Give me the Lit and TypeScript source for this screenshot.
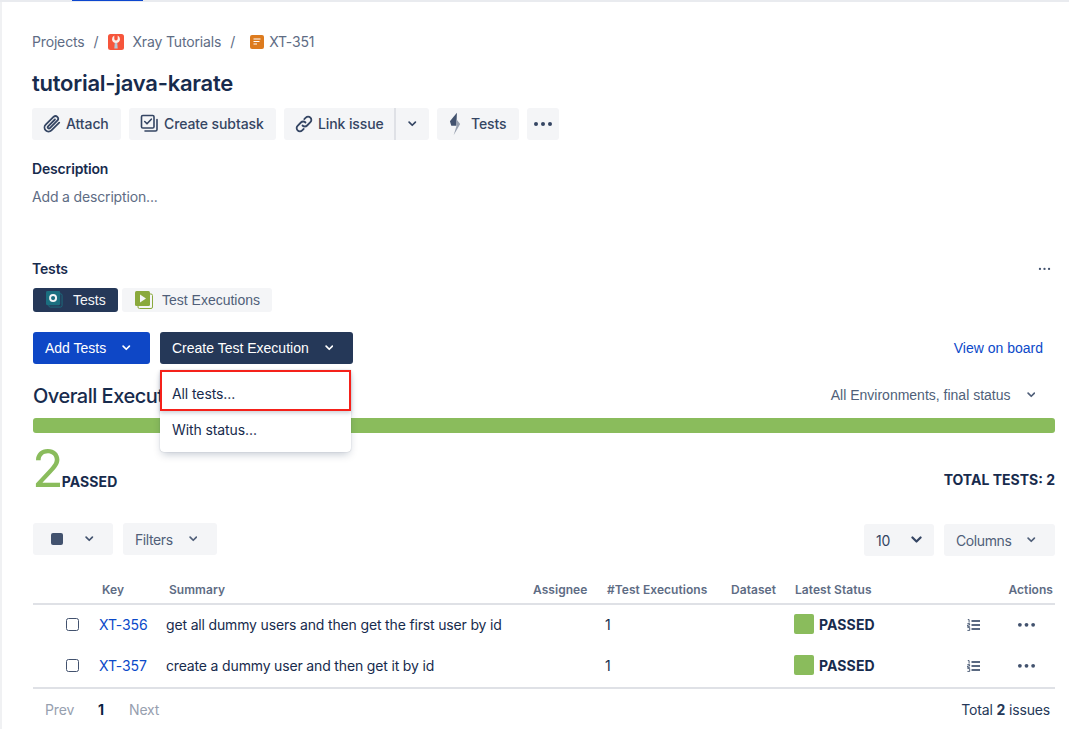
import { LitElement, html, css } from "lit";
import { customElement } from "lit/decorators.js";

const chev = (w = 8.5) => html`<svg viewBox="0 0 10 7" width=${w} height=${(w * 7) / 10}><path d="M1.300 1.300 5 5l3.700-3.700" fill="none" stroke="currentColor" stroke-width="2" stroke-linecap="round" stroke-linejoin="round"/></svg>`;
const dots = (w = 20, r = 2) => html`<svg viewBox="0 0 20 6" width=${w} height=${(w * 6) / 20}><g fill="currentColor"><circle cx="3" cy="3" r=${r}/><circle cx="10" cy="3" r=${r}/><circle cx="17" cy="3" r=${r}/></g></svg>`;
const listIcon = html`<svg viewBox="0 0 13 12" width="13" height="12"><path d="M4.500 2h8.500M4.500 6h8.500M4.500 10h8.500" stroke="#253858" stroke-width="1.600" fill="none"/><path d="M.8 .6h1.300v3M.4 4.600h2.200v1.400H.6v1.400h2.200M.4 8.600h2.300v2.800H.4" stroke="#253858" stroke-width=".8" fill="none"/></svg>`;

@customElement("app-root")
export class AppRoot extends LitElement {
  static styles = css`
    :host { display: block; width: 1069px; height: 729px; overflow: hidden; position: relative; background: #fff; font-family: Inter, "Liberation Sans", sans-serif; color: #172b4d; font-size: 14px; letter-spacing: -.16px; box-sizing: border-box; }
    * { box-sizing: border-box; }
    .topline { height: 2px; background: #e9ebef; display: flex; padding-left: 72px; }
    .topline i { display: block; width: 71px; height: 1px; background: #0c47cf; }
    .page { height: 727px; border-left: 2px solid #f0f1f3; padding: 0 14px 0 30px; display: flex; flex-direction: column; }
    .crumbs { height: 24px; margin-top: 28px; display: flex; align-items: center; color: #5e6c84; font-size: 14px; }
    .sep { margin-left: 9px; width: 15px; }
    .crumbs .sep2 { margin-left: 9px; width: 20px; }
    .crumbs .proj { margin-right: 8px; }
    .crumbs .iss { margin-right: 5px; }
    h1 { margin: 14px 0 0; height: 30px; line-height: 30px; font-size: 22px; font-weight: 600; color: #172b4d; letter-spacing: -.25px; }
    .actions { display: flex; margin-top: 10px; gap: 8px; }
    .btn { height: 32px; background: #f4f5f7; border-radius: 3px; display: flex; align-items: center; color: #344563; font-size: 14px; font-weight: 500; letter-spacing: -.1px; }
    .attach { width: 89px; padding-left: 10px; gap: 5px; }
    .sub { width: 147px; padding-left: 11px; gap: 5px; }
    .link { width: 112px; padding-left: 10px; gap: 4px; border-right: 2px solid #dfe1e6; border-radius: 3px 0 0 3px; }
    .linkc { width: 33px; justify-content: center; margin-left: -8px; border-radius: 0 3px 3px 0; }
    .testsb { width: 82px; padding-left: 12px; gap: 9px; }
    .more { width: 32px; justify-content: center; }
    .h3 { font-size: 14px; font-weight: 600; color: #172b4d; height: 20px; line-height: 20px; }
    .desc { margin-top: 19px; }
    .add { margin-top: 8px; color: #5e6c84; height: 20px; line-height: 20px; }
    .testsh { margin-top: 52px; display: flex; justify-content: space-between; align-items: center; padding-right: 4px; color: #42526e; }
    .testsh span { color: #172b4d; }
    .sans { font-family: "Liberation Sans", Arial, sans-serif; letter-spacing: 0; }
    .tabs { display: flex; margin-top: 9px; gap: 4px; margin-left: 1px; }
    .tab { height: 24px; border-radius: 3px; display: flex; align-items: center; font-size: 14px; }
    .tab.on { width: 85px; background: #253858; color: #f4f5f7; padding-left: 13px; gap: 10px; }
    .tab.off { width: 150px; background: #f4f5f7; color: #505f79; padding-left: 13px; gap: 9px; }
    .ctl { display: flex; justify-content: space-between; align-items: center; margin-top: 20px; margin-left: 1px; }
    .ctl .l { display: flex; gap: 10px; }
    .pri { height: 32px; border-radius: 3px; display: flex; align-items: center; color: #fff; font-size: 14px; padding-left: 12px; }
    .add-t { width: 117px; background: #0e47c6; gap: 16px; }
    .wrap { position: relative; }
    .create { width: 193px; background: #253858; gap: 16px; }
    .menu { position: absolute; left: 0; top: 38px; width: 191px; height: 82px; background: #fff; border-radius: 0 0 4px 4px; box-shadow: 0 4px 8px -2px rgba(9,30,66,.25), 0 0 1px rgba(9,30,66,.31); z-index: 3; color: #172b4d; font-family: Inter, sans-serif; letter-spacing: -.1px; }
    .mi { height: 36px; display: flex; align-items: center; padding-left: 12px; }
    .mi.sel { height: 41px; border: 2px solid #f5211a; padding: 6px 0 0 10px; box-shadow: 0 2px 4px rgba(9,30,66,.2); margin-bottom: 1px; }
    .vb { color: #0b49c9; font-size: 14px; margin-right: 12px; }
    .ov { display: flex; justify-content: space-between; align-items: center; height: 26px; margin-top: 20px; margin-left: 1px; }
    .ov .t { font-size: 20px; font-weight: 500; color: #172b4d; white-space: nowrap; letter-spacing: -.5px; }
    .env { color: #505f79; display: flex; align-items: center; gap: 16px; margin: 0 20px 2px 0; font-size: 14px; }
    .bar { height: 15px; background: #8abc5c; border-radius: 3px; margin-top: 9px; margin-left: 1px; }
    .sum { display: flex; justify-content: space-between; align-items: flex-start; height: 68px; margin-left: 1px; }
    .big { display: flex; align-items: baseline; color: #8abc5c; font-size: 52px; line-height: 51px; height: 51px; margin-top: 10px; margin-left: -1px; letter-spacing: 0; }
    .big b { font-size: 14px; font-weight: 700; color: #172b4d; line-height: 14px; margin-left: -2px; letter-spacing: .1px; }
    .tot { font-weight: 700; color: #172b4d; height: 14px; line-height: 14px; margin-top: 40px; letter-spacing: 0; }
    .tb { display: flex; justify-content: space-between; margin-top: 23px; margin-left: 1px; height: 32px; }
    .tb .g { display: flex; gap: 10px; }
    .sq { width: 80px; padding-left: 18px; gap: 22px; color: #42526e; }
    .sq i { width: 12px; height: 12px; border-radius: 2px; background: #42526e; display: block; }
    .fl { width: 94px; padding: 1px 0 0 12px; gap: 16px; font-weight: 400; color: #505f79; letter-spacing: -.4px; }
    .n10 { width: 70px; padding: 1px 0 0 12px; gap: 21px; font-weight: 400; margin-top: 1px; }
    .cols { width: 111px; padding: 1px 0 0 12px; gap: 16px; font-weight: 400; color: #505f79; margin-top: 1px; letter-spacing: -.4px; }
    .table { margin-top: 22px; margin-left: 1px; }
    .row { display: grid; grid-template-columns: 66px 67px 364px 74px 124px 64px 144px 1fr; align-items: center; }
    .head { height: 28px; padding-bottom: 1px; border-bottom: 2px solid #dfe1e6; font-size: 12px; font-weight: 600; color: #5e6c84; letter-spacing: .05px; }
    .head > div { padding-left: 3px; white-space: nowrap; }
    .head .ac { text-align: right; padding-right: 2px; }
    .b { height: 41px; padding-bottom: 2px; color: #172b4d; white-space: nowrap; }
    .cb { width: 13px; height: 13px; border: 1px solid #42526e; border-radius: 2.500px; margin-left: 33px; display: block; }
    .key { color: #0b49c9; letter-spacing: -.1px; }
    .one { padding-left: 1px; }
    .stat { display: flex; align-items: center; gap: 5px; font-weight: 700; letter-spacing: .1px; padding-left: 2px; }
    .stat i { width: 20px; height: 20px; background: #8abc5c; border-radius: 2px; display: block; }
    .acts { display: flex; align-items: center; justify-content: flex-end; padding: 2px 19px 0 0; gap: 37px; color: #42526e; }
    .tfoot { border-top: 2px solid #dfe1e6; display: flex; justify-content: space-between; align-items: center; height: 43px; margin-left: 1px; padding: 2px 5px 0 12px; }
    .pg { display: flex; color: #97a0af; gap: 24px; align-items: center; }
    .pg b { color: #091e42; font-weight: 700; margin-right: 1px; }
    .tt { color: #253858; }
    .tt b { font-weight: 700; }
  `;

  render() {
    return html`
      <div class="topline"><i></i></div>
      <div class="page">
        <div class="crumbs">
          <span>Projects</span><span class="sep">/</span>
          <svg class="proj" viewBox="0 0 16 16" width="16" height="16"><rect width="16" height="16" rx="2.500" fill="#f6553b"/><path d="M6.800 8.500h2.400l.5 6H6.300z" fill="#b5c7d6"/><path d="M6.300 1.600v3.200a1.700 1.700 0 0 0 3.400 0V1.600a4 4 0 0 1 2.300 3.600c0 2-1.700 3.800-4 3.800s-4-1.800-4-3.800A4 4 0 0 1 6.300 1.600z" fill="#fbeee9"/></svg>
          <span>Xray Tutorials</span><span class="sep sep2">/</span>
          <svg class="iss" viewBox="0 0 14 14" width="14" height="14"><rect width="14" height="14" rx="2" fill="#dd7b1e"/><path d="M3.500 4h7M3.500 6.500h6M3.500 9h3.500" stroke="#fff" stroke-width="1.200"/></svg>
          <span>XT-351</span>
        </div>
        <h1>tutorial-java-karate</h1>
        <div class="actions">
          <div class="btn attach"><svg viewBox="0 0 19 19" width="19" height="19"><path d="M17.200 8.600 9.400 16.400a4 4 0 0 1-5.700-5.700l8-8a2.700 2.700 0 0 1 3.800 3.800l-7.600 7.600a1.200 1.200 0 0 1-1.800-1.800l6.800-6.800" fill="none" stroke="#344563" stroke-width="1.800" stroke-linecap="round"/></svg>Attach</div>
          <div class="btn sub"><svg viewBox="0 0 19 19" width="19" height="19"><rect x="1.500" y="1.500" width="12.500" height="12.500" rx="1.300" fill="none" stroke="#344563" stroke-width="1.600"/><path d="M4.700 7.500l2.300 2.300 4.300-4.600" fill="none" stroke="#344563" stroke-width="1.600" stroke-linecap="round" stroke-linejoin="round"/><path d="M17 5.500v10a1.500 1.500 0 0 1-1.500 1.500H5" fill="none" stroke="#344563" stroke-width="1.600" stroke-linecap="round"/></svg>Create subtask</div>
          <div class="btn link"><svg viewBox="0 0 20 20" width="20" height="20"><path d="M8.500 11.500a3.200 3.200 0 0 0 4.600 0l3.300-3.300a3.200 3.200 0 0 0-4.600-4.600l-1.500 1.500M11.500 8.500a3.200 3.200 0 0 0-4.600 0l-3.300 3.300a3.200 3.200 0 0 0 4.600 4.600l1.500-1.500" fill="none" stroke="#344563" stroke-width="1.800" stroke-linecap="round"/></svg>Link issue</div>
          <div class="btn linkc">${chev()}</div>
          <div class="btn testsb"><svg viewBox="0 0 14 24" width="13" height="24"><path d="M8.500 0 1 9l1.500 5H8z" fill="#42526e"/><path d="M8 7 12 12l-7 12 3-9.500z" fill="#97a0af"/></svg>Tests</div>
          <div class="btn more">${dots(20, 2)}</div>
        </div>
        <div class="h3 desc">Description</div>
        <div class="add">Add a description...</div>
        <div class="h3 testsh"><span>Tests</span>${dots(13, 1.800)}</div>
        <div class="tabs sans">
          <div class="tab on"><svg viewBox="0 0 18 18" width="17" height="17"><rect x="3" y="3" width="14" height="14" rx="1.500" fill="none" stroke="#1d6c7e"/><rect width="15" height="15" rx="1.500" fill="#1b6f80"/><circle cx="7.500" cy="7.500" r="3.200" fill="none" stroke="#f4f5f7" stroke-width="2"/></svg>Tests</div>
          <div class="tab off"><svg viewBox="0 0 18 18" width="18" height="18"><rect x="3" y="3" width="14.500" height="14.500" rx="1.500" fill="none" stroke="#8aa93c"/><rect width="15" height="15" rx="1.500" fill="#8aa93c"/><path d="M5 3.500v8l6-4z" fill="#f4f5f7"/></svg>Test Executions</div>
        </div>
        <div class="ctl sans">
          <div class="l">
            <div class="pri add-t">Add Tests ${chev()}</div>
            <div class="wrap">
              <div class="pri create">Create Test Execution ${chev()}</div>
              <div class="menu">
                <div class="mi sel">All tests...</div>
                <div class="mi">With status...</div>
              </div>
            </div>
          </div>
          <span class="vb">View on board</span>
        </div>
        <div class="ov">
          <span class="t">Overall Execut</span>
          <span class="env sans">All Environments, final status ${chev()}</span>
        </div>
        <div class="bar"></div>
        <div class="sum">
          <div class="big">2<b>PASSED</b></div>
          <div class="tot">TOTAL TESTS: 2</div>
        </div>
        <div class="tb">
          <div class="g">
            <div class="btn sq"><i></i>${chev()}</div>
            <div class="btn fl">Filters ${chev()}</div>
          </div>
          <div class="g">
            <div class="btn n10">10 ${chev(11)}</div>
            <div class="btn cols">Columns ${chev()}</div>
          </div>
        </div>
        <div class="table">
          <div class="row head">
            <div></div><div>Key</div><div>Summary</div><div>Assignee</div><div>#Test Executions</div><div>Dataset</div><div>Latest Status</div><div class="ac">Actions</div>
          </div>
          ${[["XT-356", "get all dummy users and then get the first user by id"], ["XT-357", "create a dummy user and then get it by id"]].map(
            ([k, s]) => html`<div class="row b">
              <span class="cb"></span>
              <span class="key">${k}</span>
              <span>${s}</span>
              <span></span>
              <span class="one">1</span>
              <span></span>
              <span class="stat"><i></i>PASSED</span>
              <span class="acts">${listIcon}${dots(19, 2)}</span>
            </div>`
          )}
        </div>
        <div class="tfoot">
          <div class="pg"><span>Prev</span><b>1</b><span>Next</span></div>
          <div class="tt">Total <b>2</b> issues</div>
        </div>
      </div>
    `;
  }
}
